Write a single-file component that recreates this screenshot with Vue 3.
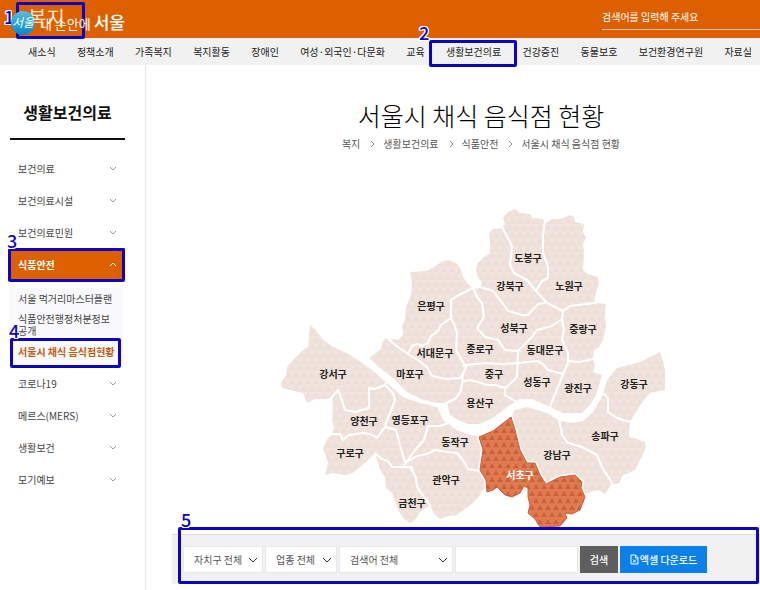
<script setup>
import { ref } from 'vue'

const navItems = ['새소식', '정책소개', '가족복지', '복지활동', '장애인', '여성·외국인·다문화', '교육', '생활보건의료', '건강증진', '동물보호', '보건환경연구원', '자료실']
const sideItems = [
  { label: '보건의료' },
  { label: '보건의료시설' },
  { label: '보건의료민원' },
  { label: '식품안전', open: true, children: ['서울 먹거리마스터플랜', '식품안전행정처분정보공개', '서울시 채식 음식점현황'] },
  { label: '코로나19' },
  { label: '메르스(MERS)' },
  { label: '생활보건' },
  { label: '모기예보' }
]
const crumbs = ['복지', '생활보건의료', '식품안전', '서울시 채식 음식점 현황']
const keyword = ref('')

const north = '369,358 381,349 383,341 386,338 398,340 403,335 402,326 405,320 406,307 411,295 412,283 410,272 427,271 443,261 450,260 458,265 461,270 463,277 468,284 473,288 480,287 482,283 477,275 476,268 478,263 483,258 490,253 490,243 489,233 493,229 502,228 505,224 503,218 508,212 515,209 520,213 530,214 532,218 543,219 546,223 552,219 560,219 570,215 574,217 575,222 584,224 583,232 586,238 583,244 584,253 583,270 588,274 598,277 599,283 597,290 594,300 597,303 606,304 605,315 606,327 603,340 599,347 594,350 593,360 595,366 593,372 602,375 600,382 596,395 590,405 582,413 563,413 550,407 532,399 520,399 510,405 493,418 480,424 468,424 458,420 450,415 447,403 437,403 423,400 407,392 393,378 380,368'
const south = '310,325 315,329 323,340 333,347 347,353 358,360 372,370 387,383 403,397 420,403 437,407 443,420 457,430 470,435 480,436 493,430 511,417 515,410 527,407 547,413 560,421 572,423 583,421 593,412 602,397 607,380 617,368 640,362 660,352 663,361 665,370 665,390 650,393 644,400 637,410 630,422 629,437 637,439 645,442 646,447 641,458 635,470 629,473 623,475 619,483 611,485 605,494 598,490 585,494 577,500 530,492 490,480 483,490 478,498 468,507 457,515 448,516 440,519 434,514 430,505 420,512 416,519 410,523 404,519 398,510 396,503 392,493 386,488 385,477 380,470 378,462 375,453 366,462 353,473 345,475 333,473 325,475 328,463 323,448 327,439 332,435 334,427 332,420 333,407 332,397 326,399 315,399 307,403 303,393 294,391 282,388 281,382 286,376 287,367 294,359 303,350 308,347 309,337'
const seocho = '479,437 493,431 511,417 515,430 520,450 527,463 535,463 540,475 546,484 560,477 575,475 582,482 581,488 585,497 580,510 572,514 565,513 567,518 560,526 540,527 535,519 528,513 530,505 528,497 528,488 524,486 520,493 512,497 505,495 497,487 493,490 487,492 486,480 480,470 483,450'
const borders = [
  '386,337 398,347 408,354 418,360 427,367 432,376 446,379 460,378 463,374',
  '408,354 412,346 418,344 422,346 428,343 431,336 438,331 441,325 451,318',
  '451,318 451,300 459,295 473,288 480,287',
  '451,318 454,324 457,333 456,350 464,364 467,366',
  '463,366 467,365 485,363 503,364 518,363 537,361 543,364 548,370 563,374',
  '462,382 470,380 478,382 487,385 495,385 505,388 511,383 517,377 518,351',
  '467,365 463,374 462,382 461,391 456,398 445,404',
  '505,388 505,395 515,401 518,403',
  '473,288 477,297 482,303 484,317 477,328 485,337 498,340 505,350 518,351',
  '480,287 493,291 504,305 508,311 522,315 528,315 538,304 545,303',
  '502,227 505,233 508,238 512,247 510,265 514,273 527,280 536,291 547,303 563,311 570,306 594,303 600,301',
  '545,218 543,237 543,253 548,267 548,278 542,281 536,291',
  '518,351 532,337 537,330 552,326 562,319',
  '563,311 562,320 564,330 562,339 568,353 568,363 563,374 558,387 549,409',
  '568,361 580,362 593,359 597,358',
  '331,398 338,390 342,400 345,410 355,412 369,408 369,388 375,389 385,385 387,381',
  '385,385 393,393 395,400 390,413 387,420 385,427 377,438 370,434 363,433 349,435 343,440 340,434 330,434',
  '385,427 396,430 402,452 405,462',
  '448,423 440,426 428,426 424,440 415,450 407,461 403,467',
  '375,453 382,459 388,461 392,467 402,467 413,467',
  '405,463 417,456 427,454 435,450 447,452 457,453 463,460 468,469 480,471 487,473',
  '410,466 413,472 416,478 417,487 424,497 430,505 430,510',
  '559,418 562,435 568,443 582,447 597,455 602,467 612,483 615,488',
  '600,391 608,398 608,412 617,418 630,422 634,422'
]
const districts = [
  ['도봉구', 528, 262], ['강북구', 510, 290], ['노원구', 569, 290], ['은평구', 431, 310], ['성북구', 514, 332],
  ['중랑구', 583, 333], ['서대문구', 435, 357], ['종로구', 480, 353], ['동대문구', 545, 354], ['강서구', 333, 378],
  ['마포구', 410, 378], ['중구', 494, 378], ['성동구', 537, 386], ['광진구', 578, 392], ['강동구', 634, 388],
  ['용산구', 480, 407], ['양천구', 364, 425], ['영등포구', 410, 424], ['동작구', 455, 446], ['송파구', 605, 440],
  ['구로구', 350, 457], ['강남구', 557, 459], ['관악구', 446, 484], ['금천구', 412, 507]
]
</script>

<template>
  <div class="page">
    <header class="top">
      <div class="brand">
        <a class="category" href="#">복지</a>
        <span class="mark mark-brand"><b>1</b></span>
        <a class="logo" href="#">
          <span class="ball">서울</span>
          <span class="name">내 손안에 <strong>서울</strong></span>
        </a>
      </div>
      <input class="site-search" type="text" aria-label="검색어" placeholder="검색어를 입력해 주세요">
    </header>

    <nav class="gnb">
      <a v-for="item in navItems" :key="item" href="#">
        {{ item }}<span v-if="item === '생활보건의료'" class="mark mark-nav"><b>2</b></span>
      </a>
    </nav>

    <div class="body">
      <aside class="side">
        <h2>생활보건의료</h2>
        <ul class="menu">
          <li v-for="item in sideItems" :key="item.label">
            <a class="row" :class="{ active: item.open }" href="#">
              {{ item.label }}
              <svg class="chev" viewBox="0 0 8 5"><path :d="item.open ? 'M1 4 4 1 7 4' : 'M1 1 4 4 7 1'" /></svg>
              <span v-if="item.open" class="mark mark-side"><b>3</b></span>
            </a>
            <ul v-if="item.children" class="sub">
              <li v-for="(child, i) in item.children" :key="child">
                <a :class="{ current: i === 2 }" href="#">{{ child }}<span v-if="i === 2" class="mark mark-sub"><b>4</b></span></a>
              </li>
            </ul>
          </li>
        </ul>
      </aside>

      <main>
        <div class="heading">
          <h1>서울시 채식 음식점 현황</h1>
          <ol class="crumbs">
            <li v-for="(c, i) in crumbs" :key="c">
              <svg v-if="i" viewBox="0 0 5 8"><path d="M1 1 4 4 1 7" /></svg>
              <a href="#">{{ c }}</a>
            </li>
          </ol>
        </div>

        <svg class="map" viewBox="261 200 410 334" role="img" aria-label="서울시 자치구 지도">
          <defs>
            <pattern id="pale" width="8" height="14" patternUnits="userSpaceOnUse">
              <rect width="8" height="14" fill="#f1e4de" />
              <path d="M0 7 4 0 8 7ZM-4 14 0 7 4 14ZM4 14 8 7 12 14Z" fill="#eedfd9" />
            </pattern>
            <pattern id="strong" width="8" height="14" patternUnits="userSpaceOnUse">
              <rect width="8" height="14" fill="#e07a50" />
              <path d="M1 6 4 1 7 6ZM-3 13 0 8 3 13ZM5 13 8 8 11 13Z" fill="#cb6039" />
            </pattern>
          </defs>
          <polygon :points="north" fill="url(#pale)" />
          <polygon :points="south" fill="url(#pale)" />
          <polyline v-for="line in borders" :key="line" class="border" :points="line" />
          <polygon class="halo" :points="seocho" />
          <polygon class="picked" :points="seocho" fill="url(#strong)" />
          <text v-for="d in districts" :key="d[0]" :x="d[1]" :y="d[2]">{{ d[0] }}</text>
          <text class="picked-name" x="520" y="479">서초구</text>
        </svg>

        <form class="filter" @submit.prevent>
          <span class="pick pick-area">
            <select aria-label="자치구"><option>자치구 전체</option></select>
            <svg viewBox="0 0 10 6"><path d="M1 1 5 5 9 1" /></svg>
          </span>
          <span class="pick pick-type">
            <select aria-label="업종"><option>업종 전체</option></select>
            <svg viewBox="0 0 10 6"><path d="M1 1 5 5 9 1" /></svg>
          </span>
          <span class="pick pick-field">
            <select aria-label="검색 항목"><option>검색어 전체</option></select>
            <svg viewBox="0 0 10 6"><path d="M1 1 5 5 9 1" /></svg>
          </span>
          <input v-model="keyword" class="keyword" type="text" aria-label="검색어 입력">
          <button class="search" type="submit">검색</button>
          <button class="excel" type="button">
            <svg viewBox="0 0 9 11"><path d="M1 1H5.500L8 3.500V10H1ZM5.500 1V4H8M3 5.500 6 8.500M6 5.500 3 8.500" /></svg>엑셀 다운로드
          </button>
          <span class="mark mark-filter"><b>5</b></span>
        </form>
      </main>
    </div>
  </div>
</template>

<style>
body {
  margin: 0;
  background: #fff;
}
</style>

<style scoped>
.page {
  display: flex;
  flex-direction: column;
  min-height: 100vh;
  font-family: "Noto Sans CJK KR", sans-serif;
  font-size: 10px;
  color: #333;
}
.page * {
  box-sizing: border-box;
}
a {
  color: inherit;
  text-decoration: none;
}
ul, ol {
  list-style: none;
  margin: 0;
  padding: 0;
}
input, select, button {
  font: inherit;
  margin: 0;
  border: 0;
  border-radius: 0;
}
.mark {
  position: absolute;
  border: 3px solid #0f04be;
  border-radius: 2px;
  pointer-events: none;
}
.mark b {
  position: absolute;
  left: -4px;
  top: -21px;
  font-size: 18px;
  line-height: 20px;
  font-weight: 500;
  color: #0f04be;
  text-shadow: 1px 0 #fff, -1px 0 #fff, 0 1px #fff, 0 -1px #fff, 1px 1px #fff, -1px -1px #fff, 1px -1px #fff, -1px 1px #fff;
}

.top {
  display: flex;
  justify-content: space-between;
  height: 38px;
  background: #dc6000;
  color: #fff;
}
.brand {
  position: relative;
  width: 140px;
}
.category {
  position: absolute;
  left: 28px;
  top: 4px;
  font-size: 20px;
  line-height: 28px;
  color: #ffe6d2;
}
.mark-brand {
  left: 16px;
  top: 2px;
  width: 69px;
  height: 37px;
}
.mark-brand b {
  left: -15px;
  top: 1px;
}
.logo {
  position: absolute;
  left: 11px;
  top: 10px;
  display: flex;
  align-items: center;
  gap: 5px;
}
.ball {
  width: 24px;
  height: 24px;
  border-radius: 50%;
  background: linear-gradient(#55bfe0, #0787cb);
  font-size: 12px;
  line-height: 22px;
  font-style: italic;
  text-align: center;
}
.name {
  font-size: 13px;
  line-height: 24px;
  white-space: nowrap;
}
.name strong {
  font-size: 17px;
  font-weight: 500;
}
.site-search {
  width: 158px;
  height: 22px;
  margin-top: 8px;
  padding: 0 0 4px;
  background: transparent;
  border-bottom: 1px solid #f3c39c;
  color: #fff;
  outline: 0;
}
.site-search::placeholder {
  color: #fff;
  opacity: 1;
}

.gnb {
  display: flex;
  justify-content: space-between;
  padding: 0 8px 0 28px;
  background: #f1f1f1;
  line-height: 27px;
  white-space: nowrap;
  color: #222;
}
.gnb a {
  position: relative;
}
.mark-nav {
  inset: 2px -16px -2px -17px;
}
.mark-nav b {
  left: -13px;
}

.body {
  display: flex;
  flex: 1;
}
.side {
  flex: 0 0 146px;
  padding: 0 20px 0 10px;
  border-right: 1px solid #e6e6e6;
}
.side h2 {
  margin: 0 0 12px;
  padding: 35px 0 14px;
  border-bottom: 2px solid #111;
  font-size: 16px;
  line-height: 24px;
  font-weight: 700;
  text-align: center;
  color: #111;
}
.row {
  position: relative;
  display: flex;
  align-items: center;
  justify-content: space-between;
  height: 32px;
  padding: 0 8px;
  color: #444;
}
.chev {
  width: 8px;
  height: 5px;
  fill: none;
  stroke: #999;
}
.row.active {
  background: #dc6000;
  color: #fff;
  font-weight: 700;
}
.active .chev {
  stroke: #fff;
}
.mark-side {
  inset: 0 0 -2px -2px;
}
.sub {
  margin: 8px 2px 0 0;
  padding-bottom: 7px;
  background: #f9f9fb;
  color: #444;
  line-height: 12px;
}
.sub a {
  position: relative;
  display: block;
  padding: 5px 8px 3px;
  word-break: break-all;
}
.sub .current {
  padding: 6px 0 2px 8px;
  color: #c45a10;
  font-weight: 700;
  white-space: nowrap;
}
.mark-sub {
  inset: -2px 2px -8px 0;
}

main {
  flex: 1;
  min-width: 0;
  padding-left: 26px;
}
.heading {
  padding: 31px 0 0 30px;
  text-align: center;
}
h1 {
  margin: 0;
  font-size: 25px;
  line-height: 38px;
  font-weight: 300;
  color: #000;
}
.crumbs {
  display: flex;
  justify-content: center;
  line-height: 20px;
  color: #555;
}
.crumbs svg {
  width: 5px;
  height: 8px;
  margin: 0 8px 0 10px;
  fill: none;
  stroke: #888;
}
.map {
  display: block;
  width: 100%;
  height: auto;
  max-width: 410px;
  margin: 46px auto 0;
}
.map text {
  font-size: 10px;
  font-weight: 700;
  text-anchor: middle;
  fill: #222;
}
.map .picked-name {
  fill: #fff;
}
.border {
  fill: none;
  stroke: #fff;
  stroke-width: 2;
  stroke-linejoin: round;
}
.halo {
  fill: #fff;
  stroke: #fff;
  stroke-width: 4;
}
.picked {
  stroke: #cc6038;
  stroke-width: 1;
}

.filter {
  position: relative;
  display: flex;
  gap: 2px;
  height: 50px;
  padding: 11px 53px 11px 11px;
  background: #f1f1f1;
  border-top: 1px solid #ddd;
}
.pick {
  display: grid;
  align-items: center;
  flex: none;
}
.pick select, .pick svg {
  grid-area: 1 / 1;
}
.pick select {
  appearance: none;
  width: 100%;
  height: 100%;
  padding: 0 0 0 10px;
  background: #fff;
  border: 1px solid #e8e8e8;
  color: #555;
}
.pick svg {
  justify-self: end;
  width: 10px;
  height: 6px;
  margin-right: 5px;
  fill: none;
  stroke: #333;
  pointer-events: none;
}
.pick-area {
  width: 80px;
}
.pick-type {
  width: 72px;
}
.pick-field {
  width: 114px;
}
.keyword {
  flex: 1;
  min-width: 0;
  padding: 0 8px;
  background: #fff;
  border: 1px solid #e8e8e8;
}
.search, .excel {
  flex: none;
  padding: 0;
  color: #fff;
  font-weight: 500;
}
.search {
  width: 38px;
  background: #5e5e5e;
}
.excel {
  display: flex;
  align-items: center;
  justify-content: center;
  gap: 1px;
  width: 87px;
  background: #0a80e8;
}
.excel svg {
  width: 9px;
  height: 11px;
  fill: none;
  stroke: #fff;
}
.mark-filter {
  inset: -8px 1px 0 6px;
}
.mark-filter b {
  left: 0;
}
</style>
